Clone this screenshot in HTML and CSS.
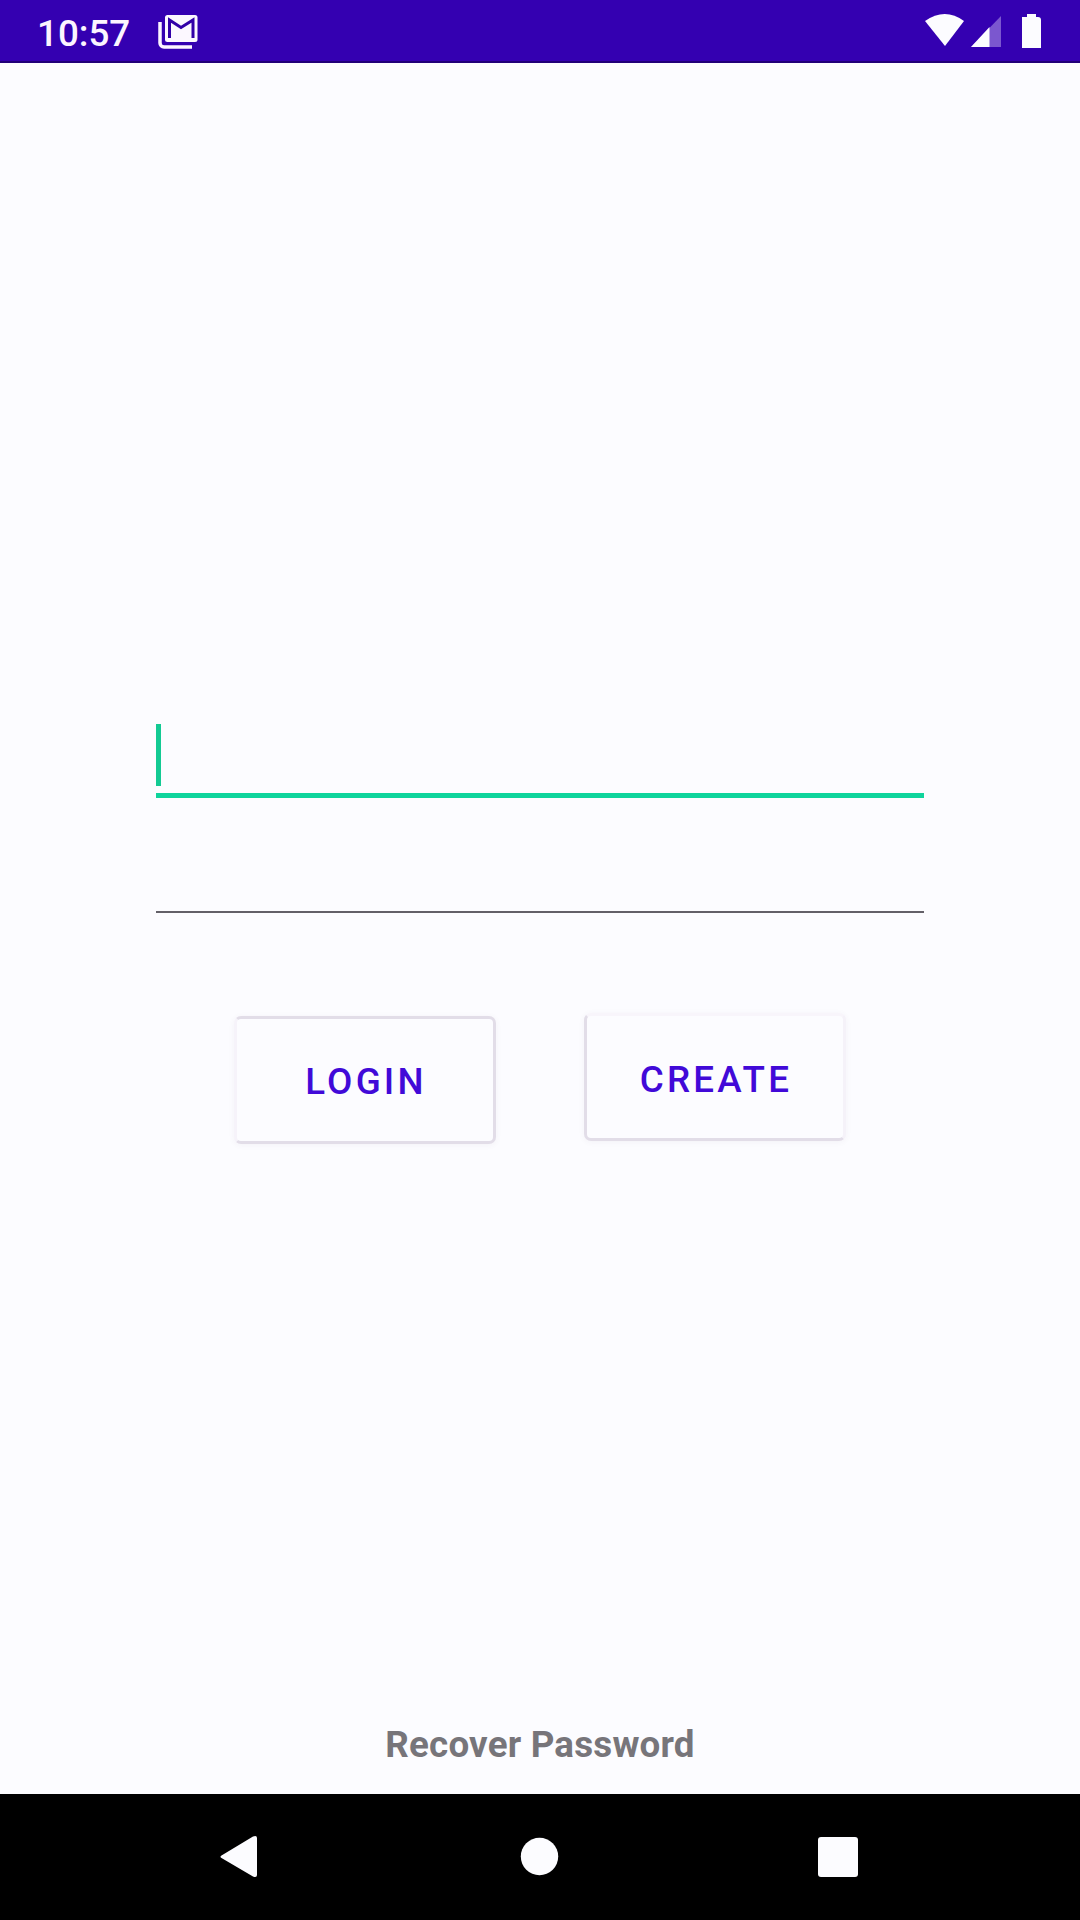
FILE: index.html
```html
<!DOCTYPE html>
<html lang="en">
<head>
<meta charset="utf-8">
<title>Login</title>
<link rel="stylesheet" href="styles.css">
</head>
<body>
<header class="status-bar">
  <span class="clock">10:57</span>
  <svg class="mail-icon" width="40" height="34" viewBox="0 0 40 34">
    <path d="M2 7v21a4 4 0 0 0 4 4h28" fill="none" stroke="#fcf5ff" stroke-width="3.5"/>
    <rect x="7" y="0" width="32.500" height="27" rx="2.500" fill="#fcf8ff"/>
    <path d="M11.500 23V5L23 12.500 35 5v18" fill="none" stroke="#3200a8" stroke-width="3"/>
  </svg>
  <span class="spacer"></span>
  <svg class="system-icons" width="120" height="36" viewBox="0 0 120 36">
    <path d="M0 8Q20-6 39 8L20 33Z" fill="#fcfcff"/>
    <path d="M46 34L76 3V34Z" fill="#7b57cf"/>
    <path d="M46 34L64.500 14V34Z" fill="#fcfcff"/>
    <path d="M97 4h5V1h9v3h2q3 0 3 3v28H97Z" fill="#fcfcff"/>
  </svg>
</header>
<main class="screen">
  <form class="login-form">
    <div class="field field-active"><span class="caret"></span></div>
    <div class="field"></div>
    <div class="actions">
      <button class="button button-login" type="button">LOGIN</button>
      <button class="button button-create" type="button">CREATE</button>
    </div>
  </form>
  <a class="recover">Recover Password</a>
</main>
<nav class="nav-bar">
  <svg class="nav-icon" width="44" height="44" viewBox="0 0 44 44"><path d="M3.500 20.500L35 1.500Q39 0 39 3V40Q39 43 35 41.500L3.500 23Q1.500 21.700 3.500 20.500Z" fill="#fcfcff"/></svg>
  <svg class="nav-icon" width="44" height="44" viewBox="0 0 44 44"><circle cx="22.500" cy="21.500" r="18.700" fill="#fcfcff"/></svg>
  <svg class="nav-icon" width="44" height="44" viewBox="0 0 44 44"><rect x="2" y="2" width="40" height="40" rx="3" fill="#fcfcff"/></svg>
</nav>
</body>
</html>
```
FILE: styles.css
```css
* { box-sizing: border-box; }
body {
  margin: 0;
  height: 1920px;
  display: flex;
  flex-direction: column;
  background: #fcfcff;
  font-family: Roboto, sans-serif;
  font-size: 36.75px;
}
.status-bar {
  height: 63px;
  display: flex;
  align-items: flex-start;
  padding: 0 38px 0 37px;
  background: #3400b1;
  border-bottom: 2px solid #210078;
}
.clock {
  margin-top: 12px;
  width: 121px;
  line-height: 43px;
  font-weight: 500;
  color: #fcf5ff;
}
.mail-icon { margin-top: 15px; }
.spacer { flex: 1; }
.system-icons { margin-top: 13px; margin-right: -3px; }
.screen {
  flex: 1;
  display: flex;
  flex-direction: column;
  justify-content: space-between;
  align-items: center;
}
.login-form { width: 768px; padding-top: 661px; }
.field {
  height: 115px;
  border-bottom: 2px solid #636068;
}
.field-active {
  height: 74px;
  border-bottom: 5px solid #0fd49c;
}
.caret {
  display: block;
  width: 5px;
  height: 62px;
  background: #13ca93;
}
.actions {
  display: flex;
  gap: 88px;
  padding: 103px 0 0 78px;
}
.button {
  width: 262px;
  height: 128px;
  padding: 2px 0 0 2px;
  border: 3px solid #e2dde8;
  border-radius: 7px;
  background: #fcfcff;
  box-shadow: 0 1px 6px rgba(70, 50, 100, .05);
  font: 500 36.75px Roboto, sans-serif;
  letter-spacing: 3.2px;
  color: #4109d8;
}
.button-login { border-left-color: #f6f3fa; }
.button-create {
  margin-top: -3px;
  padding-top: 4px;
  border-top-color: #f8f5fb;
  border-right-color: #f5f2f9;
}
.recover {
  margin-bottom: 28px;
  line-height: 43px;
  font-weight: 700;
  letter-spacing: .2px;
  color: #77757a;
}
.nav-bar {
  height: 126px;
  display: flex;
  justify-content: space-between;
  padding: 41px 220px 0 218px;
  background: #000;
}
```
